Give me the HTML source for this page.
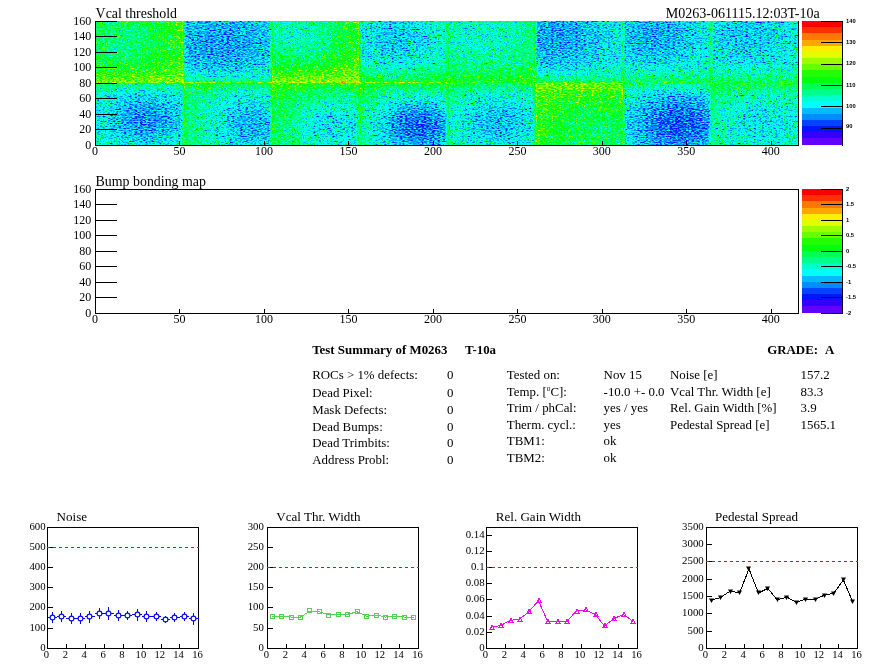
<!DOCTYPE html>
<html><head><meta charset="utf-8"><title>M0263 T-10a</title>
<style>html,body{margin:0;padding:0;background:#fff}svg{display:block;will-change:transform}.ax{shape-rendering:crispEdges}text.s{font-family:"Liberation Sans", sans-serif;font-weight:bold}text{font-family:"Liberation Serif", serif;fill:#000}</style>
</head><body>
<svg width="896" height="672" viewBox="0 0 896 672">
<rect width="896" height="672" fill="#fff"/>
<defs>
<filter id="pal" filterUnits="userSpaceOnUse" x="96" y="21" width="702" height="124" color-interpolation-filters="sRGB">
<feTurbulence type="fractalNoise" baseFrequency="0.37 0.85" numOctaves="1" seed="7" result="n"/>
<feColorMatrix in="n" type="matrix" values=".5 .5 0 0 0 .5 .5 0 0 0 .5 .5 0 0 0 0 0 0 0 1" result="ng"/>
<feComposite in="SourceGraphic" in2="ng" operator="arithmetic" k1="0" k2="1" k3="0.92" k4="-0.46" result="v"/>
<feComponentTransfer in="v"><feFuncR type="discrete" tableValues="0.39 0.2 0 0 0 0 0 0 0 0 0 0.13 0.41 0.6 0.88 1 1 1 1 1"/><feFuncG type="discrete" tableValues="0 0 0.08 0.27 0.55 0.73 1 1 1 1 1 1 1 1 1 0.93 0.65 0.47 0.19 0"/><feFuncB type="discrete" tableValues="1 1 1 1 1 1 0.99 0.8 0.52 0.33 0.05 0 0 0 0 0 0 0 0 0"/></feComponentTransfer>
</filter>
<radialGradient id="t0" gradientUnits="userSpaceOnUse" cx="0" cy="0" r="1" gradientTransform="translate(16 134) scale(50 74)">
<stop offset="0" stop-color="#6c6c6c"/>
<stop offset="0.2" stop-color="#717171"/>
<stop offset="0.4" stop-color="#7c7c7c"/>
<stop offset="0.6" stop-color="#898989"/>
<stop offset="0.8" stop-color="#939393"/>
<stop offset="1" stop-color="#9a9a9a"/>
</radialGradient>
<radialGradient id="t1" gradientUnits="userSpaceOnUse" cx="0" cy="0" r="1" gradientTransform="translate(74 130) scale(58 80)">
<stop offset="0" stop-color="#3e3e3e"/>
<stop offset="0.2" stop-color="#404040"/>
<stop offset="0.4" stop-color="#464646"/>
<stop offset="0.6" stop-color="#4d4d4d"/>
<stop offset="0.8" stop-color="#535353"/>
<stop offset="1" stop-color="#565656"/>
</radialGradient>
<radialGradient id="t2" gradientUnits="userSpaceOnUse" cx="0" cy="0" r="1" gradientTransform="translate(118 142) scale(52 74)">
<stop offset="0" stop-color="#5d5d5d"/>
<stop offset="0.2" stop-color="#636363"/>
<stop offset="0.4" stop-color="#717171"/>
<stop offset="0.6" stop-color="#838383"/>
<stop offset="0.8" stop-color="#919191"/>
<stop offset="1" stop-color="#9a9a9a"/>
</radialGradient>
<radialGradient id="t3" gradientUnits="userSpaceOnUse" cx="0" cy="0" r="1" gradientTransform="translate(178 136) scale(50 72)">
<stop offset="0" stop-color="#474747"/>
<stop offset="0.2" stop-color="#4b4b4b"/>
<stop offset="0.4" stop-color="#545454"/>
<stop offset="0.6" stop-color="#5f5f5f"/>
<stop offset="0.8" stop-color="#686868"/>
<stop offset="1" stop-color="#6e6e6e"/>
</radialGradient>
<radialGradient id="t4" gradientUnits="userSpaceOnUse" cx="0" cy="0" r="1" gradientTransform="translate(228 142) scale(50 74)">
<stop offset="0" stop-color="#5d5d5d"/>
<stop offset="0.2" stop-color="#5f5f5f"/>
<stop offset="0.4" stop-color="#666666"/>
<stop offset="0.6" stop-color="#6d6d6d"/>
<stop offset="0.8" stop-color="#737373"/>
<stop offset="1" stop-color="#777777"/>
</radialGradient>
<radialGradient id="t5" gradientUnits="userSpaceOnUse" cx="0" cy="0" r="1" gradientTransform="translate(272 140) scale(58 80)">
<stop offset="0" stop-color="#3e3e3e"/>
<stop offset="0.2" stop-color="#414141"/>
<stop offset="0.4" stop-color="#484848"/>
<stop offset="0.6" stop-color="#515151"/>
<stop offset="0.8" stop-color="#585858"/>
<stop offset="1" stop-color="#5d5d5d"/>
</radialGradient>
<radialGradient id="t6" gradientUnits="userSpaceOnUse" cx="0" cy="0" r="1" gradientTransform="translate(330 140) scale(54 78)">
<stop offset="0" stop-color="#404040"/>
<stop offset="0.2" stop-color="#444444"/>
<stop offset="0.4" stop-color="#4b4b4b"/>
<stop offset="0.6" stop-color="#555555"/>
<stop offset="0.8" stop-color="#5c5c5c"/>
<stop offset="1" stop-color="#616161"/>
</radialGradient>
<radialGradient id="t7" gradientUnits="userSpaceOnUse" cx="0" cy="0" r="1" gradientTransform="translate(384 142) scale(54 78)">
<stop offset="0" stop-color="#484848"/>
<stop offset="0.2" stop-color="#4a4a4a"/>
<stop offset="0.4" stop-color="#505050"/>
<stop offset="0.6" stop-color="#565656"/>
<stop offset="0.8" stop-color="#5c5c5c"/>
<stop offset="1" stop-color="#5f5f5f"/>
</radialGradient>
<radialGradient id="b0" gradientUnits="userSpaceOnUse" cx="0" cy="0" r="1" gradientTransform="translate(29 33) scale(42 58)">
<stop offset="0" stop-color="#3a3a3a"/>
<stop offset="0.2" stop-color="#3e3e3e"/>
<stop offset="0.4" stop-color="#474747"/>
<stop offset="0.6" stop-color="#525252"/>
<stop offset="0.8" stop-color="#5b5b5b"/>
<stop offset="1" stop-color="#616161"/>
</radialGradient>
<radialGradient id="b1" gradientUnits="userSpaceOnUse" cx="0" cy="0" r="1" gradientTransform="translate(92 26) scale(50 88)">
<stop offset="0" stop-color="#434343"/>
<stop offset="0.2" stop-color="#484848"/>
<stop offset="0.4" stop-color="#565656"/>
<stop offset="0.6" stop-color="#666666"/>
<stop offset="0.8" stop-color="#737373"/>
<stop offset="1" stop-color="#7c7c7c"/>
</radialGradient>
<radialGradient id="b2" gradientUnits="userSpaceOnUse" cx="0" cy="0" r="1" gradientTransform="translate(142 24) scale(50 72)">
<stop offset="0" stop-color="#4e4e4e"/>
<stop offset="0.2" stop-color="#535353"/>
<stop offset="0.4" stop-color="#606060"/>
<stop offset="0.6" stop-color="#6f6f6f"/>
<stop offset="0.8" stop-color="#7c7c7c"/>
<stop offset="1" stop-color="#848484"/>
</radialGradient>
<radialGradient id="b3" gradientUnits="userSpaceOnUse" cx="0" cy="0" r="1" gradientTransform="translate(191 24) scale(48 66)">
<stop offset="0" stop-color="#2f2f2f"/>
<stop offset="0.2" stop-color="#363636"/>
<stop offset="0.4" stop-color="#474747"/>
<stop offset="0.6" stop-color="#5b5b5b"/>
<stop offset="0.8" stop-color="#6c6c6c"/>
<stop offset="1" stop-color="#777777"/>
</radialGradient>
<radialGradient id="b4" gradientUnits="userSpaceOnUse" cx="0" cy="0" r="1" gradientTransform="translate(238 30) scale(52 70)">
<stop offset="0" stop-color="#454545"/>
<stop offset="0.2" stop-color="#494949"/>
<stop offset="0.4" stop-color="#545454"/>
<stop offset="0.6" stop-color="#616161"/>
<stop offset="0.8" stop-color="#6c6c6c"/>
<stop offset="1" stop-color="#737373"/>
</radialGradient>
<radialGradient id="b5" gradientUnits="userSpaceOnUse" cx="0" cy="0" r="1" gradientTransform="translate(296 16) scale(52 74)">
<stop offset="0" stop-color="#757575"/>
<stop offset="0.2" stop-color="#787878"/>
<stop offset="0.4" stop-color="#818181"/>
<stop offset="0.6" stop-color="#8b8b8b"/>
<stop offset="0.8" stop-color="#939393"/>
<stop offset="1" stop-color="#989898"/>
</radialGradient>
<radialGradient id="b6" gradientUnits="userSpaceOnUse" cx="0" cy="0" r="1" gradientTransform="translate(345 27) scale(52 72)">
<stop offset="0" stop-color="#2d2d2d"/>
<stop offset="0.2" stop-color="#323232"/>
<stop offset="0.4" stop-color="#404040"/>
<stop offset="0.6" stop-color="#505050"/>
<stop offset="0.8" stop-color="#5d5d5d"/>
<stop offset="1" stop-color="#666666"/>
</radialGradient>
<radialGradient id="b7" gradientUnits="userSpaceOnUse" cx="0" cy="0" r="1" gradientTransform="translate(396 28) scale(54 72)">
<stop offset="0" stop-color="#505050"/>
<stop offset="0.2" stop-color="#535353"/>
<stop offset="0.4" stop-color="#5b5b5b"/>
<stop offset="0.6" stop-color="#646464"/>
<stop offset="0.8" stop-color="#6c6c6c"/>
<stop offset="1" stop-color="#717171"/>
</radialGradient>
<linearGradient id="band" gradientUnits="userSpaceOnUse" x1="0" y1="80" x2="0" y2="104"><stop offset="0" stop-color="#fff" stop-opacity=".17"/><stop offset=".4" stop-color="#fff" stop-opacity=".07"/><stop offset="1" stop-color="#fff" stop-opacity="0"/></linearGradient>
<linearGradient id="band2" gradientUnits="userSpaceOnUse" x1="0" y1="80" x2="0" y2="66"><stop offset="0" stop-color="#fff" stop-opacity=".13"/><stop offset="1" stop-color="#fff" stop-opacity="0"/></linearGradient>
</defs>
<g filter="url(#pal)">
<rect x="94" y="19" width="706" height="128" fill="#545454"/>
<g transform="translate(96 145) scale(1.69 -0.78)">
<rect x="0" y="80" width="52" height="80" fill="url(#t0)"/>
<rect x="0" y="0" width="52" height="80" fill="url(#b0)"/>
<rect x="52" y="80" width="52" height="80" fill="url(#t1)"/>
<rect x="52" y="0" width="52" height="80" fill="url(#b1)"/>
<rect x="104" y="80" width="52" height="80" fill="url(#t2)"/>
<rect x="104" y="0" width="52" height="80" fill="url(#b2)"/>
<rect x="156" y="80" width="52" height="80" fill="url(#t3)"/>
<rect x="156" y="0" width="52" height="80" fill="url(#b3)"/>
<rect x="208" y="80" width="52" height="80" fill="url(#t4)"/>
<rect x="208" y="0" width="52" height="80" fill="url(#b4)"/>
<rect x="260" y="80" width="52" height="80" fill="url(#t5)"/>
<rect x="260" y="0" width="52" height="80" fill="url(#b5)"/>
<rect x="312" y="80" width="52" height="80" fill="url(#t6)"/>
<rect x="312" y="0" width="52" height="80" fill="url(#b6)"/>
<rect x="364" y="80" width="52" height="80" fill="url(#t7)"/>
<rect x="364" y="0" width="52" height="80" fill="url(#b7)"/>
<rect x="0" y="80" width="416" height="24" fill="url(#band)"/>
<rect x="0" y="66" width="416" height="14" fill="url(#band2)"/>
<g fill="#fff">
<rect x="0" y="79.4" width="208" height="1.3" opacity=".3"/>
<rect x="208" y="79.4" width="208" height="1.3" opacity=".07"/>
<rect x="50.9" y="0" width="2" height="160" opacity=".12"/>
<rect x="102.9" y="0" width="2" height="160" opacity=".12"/>
<rect x="154.9" y="0" width="2" height="160" opacity=".12"/>
<rect x="206.9" y="0" width="2" height="160" opacity=".12"/>
<rect x="258.9" y="0" width="2" height="160" opacity=".12"/>
<rect x="310.9" y="0" width="2" height="160" opacity=".12"/>
<rect x="362.9" y="0" width="2" height="160" opacity=".12"/>
</g>
</g></g>
<path class="ax" d="M95.5 21V145.5H798.5V21M95.5 129.5H117M95.5 114.5H117M95.5 98.5H117M95.5 83.5H117M95.5 67.5H117M95.5 52.5H117M95.5 36.5H117M95.5 21.5H117M179.5 145.5V141M264.5 145.5V141M348.5 145.5V141M433.5 145.5V141M517.5 145.5V141M602.5 145.5V141M686.5 145.5V141M771.5 145.5V141" stroke="#000" stroke-width="1" fill="none"/>
<text x="91.2" y="149.4" text-anchor="end" font-size="12">0</text>
<text x="91.2" y="133.4" text-anchor="end" font-size="12">20</text>
<text x="91.2" y="118.4" text-anchor="end" font-size="12">40</text>
<text x="91.2" y="102.4" text-anchor="end" font-size="12">60</text>
<text x="91.2" y="87.4" text-anchor="end" font-size="12">80</text>
<text x="91.2" y="71.4" text-anchor="end" font-size="12">100</text>
<text x="91.2" y="56.4" text-anchor="end" font-size="12">120</text>
<text x="91.2" y="40.4" text-anchor="end" font-size="12">140</text>
<text x="91.2" y="25.4" text-anchor="end" font-size="12">160</text>
<text x="94.9" y="155.1" text-anchor="middle" font-size="12">0</text>
<text x="179.4" y="155.1" text-anchor="middle" font-size="12">50</text>
<text x="263.89" y="155.1" text-anchor="middle" font-size="12">100</text>
<text x="348.39" y="155.1" text-anchor="middle" font-size="12">150</text>
<text x="432.88" y="155.1" text-anchor="middle" font-size="12">200</text>
<text x="517.38" y="155.1" text-anchor="middle" font-size="12">250</text>
<text x="601.87" y="155.1" text-anchor="middle" font-size="12">300</text>
<text x="686.37" y="155.1" text-anchor="middle" font-size="12">350</text>
<text x="770.86" y="155.1" text-anchor="middle" font-size="12">400</text>
<text x="95.6" y="17.5" font-size="13.9">Vcal threshold</text>
<text x="819.8" y="17.5" text-anchor="end" font-size="14.05">M0263-061115.12:03T-10a</text>
<rect class="ax" x="802" y="138" width="40" height="7" fill="#6300ff"/>
<rect class="ax" x="802" y="132" width="40" height="6" fill="#3300ff"/>
<rect class="ax" x="802" y="126" width="40" height="6" fill="#0014ff"/>
<rect class="ax" x="802" y="120" width="40" height="6" fill="#0044ff"/>
<rect class="ax" x="802" y="114" width="40" height="6" fill="#008bff"/>
<rect class="ax" x="802" y="108" width="40" height="6" fill="#00bbff"/>
<rect class="ax" x="802" y="101" width="40" height="7" fill="#00fffc"/>
<rect class="ax" x="802" y="95" width="40" height="6" fill="#00ffcc"/>
<rect class="ax" x="802" y="89" width="40" height="6" fill="#00ff85"/>
<rect class="ax" x="802" y="83" width="40" height="6" fill="#00ff55"/>
<rect class="ax" x="802" y="77" width="40" height="6" fill="#00ff0e"/>
<rect class="ax" x="802" y="70" width="40" height="7" fill="#22ff00"/>
<rect class="ax" x="802" y="64" width="40" height="6" fill="#69ff00"/>
<rect class="ax" x="802" y="58" width="40" height="6" fill="#99ff00"/>
<rect class="ax" x="802" y="52" width="40" height="6" fill="#e0ff00"/>
<rect class="ax" x="802" y="46" width="40" height="6" fill="#ffee00"/>
<rect class="ax" x="802" y="40" width="40" height="6" fill="#ffa700"/>
<rect class="ax" x="802" y="33" width="40" height="7" fill="#ff7700"/>
<rect class="ax" x="802" y="27" width="40" height="6" fill="#ff3000"/>
<rect class="ax" x="802" y="21" width="40" height="6" fill="#ff0000"/>
<path class="ax" d="M842.5 21V146" stroke="#000" stroke-width="1" fill="none"/>
<path class="ax" d="M821 21.5H842.5M821 42.5H842.5M821 64.5H842.5M821 85.5H842.5M821 106.5H842.5M821 128.5H842.5" stroke="#000" stroke-width="1" fill="none"/>
<text class="s" x="846" y="22.7" font-size="5.8">140</text>
<text class="s" x="846" y="43.7" font-size="5.8">130</text>
<text class="s" x="846" y="64.5" font-size="5.8">120</text>
<text class="s" x="846" y="86.7" font-size="5.8">110</text>
<text class="s" x="846" y="107.7" font-size="5.8">100</text>
<text class="s" x="846" y="128.4" font-size="5.8">90</text>
<path class="ax" d="M95.5 189V313.5H798.5V189M95.5 189.5H798.5M95.5 297.5H117M95.5 282.5H117M95.5 266.5H117M95.5 251.5H117M95.5 235.5H117M95.5 220.5H117M95.5 204.5H117M95.5 189.5H117M179.5 313.5V309M264.5 313.5V309M348.5 313.5V309M433.5 313.5V309M517.5 313.5V309M602.5 313.5V309M686.5 313.5V309M771.5 313.5V309" stroke="#000" stroke-width="1" fill="none"/>
<text x="91.2" y="317.4" text-anchor="end" font-size="12">0</text>
<text x="91.2" y="301.4" text-anchor="end" font-size="12">20</text>
<text x="91.2" y="286.4" text-anchor="end" font-size="12">40</text>
<text x="91.2" y="270.4" text-anchor="end" font-size="12">60</text>
<text x="91.2" y="255.4" text-anchor="end" font-size="12">80</text>
<text x="91.2" y="239.4" text-anchor="end" font-size="12">100</text>
<text x="91.2" y="224.4" text-anchor="end" font-size="12">120</text>
<text x="91.2" y="208.4" text-anchor="end" font-size="12">140</text>
<text x="91.2" y="193.4" text-anchor="end" font-size="12">160</text>
<text x="94.9" y="323.1" text-anchor="middle" font-size="12">0</text>
<text x="179.4" y="323.1" text-anchor="middle" font-size="12">50</text>
<text x="263.89" y="323.1" text-anchor="middle" font-size="12">100</text>
<text x="348.39" y="323.1" text-anchor="middle" font-size="12">150</text>
<text x="432.88" y="323.1" text-anchor="middle" font-size="12">200</text>
<text x="517.38" y="323.1" text-anchor="middle" font-size="12">250</text>
<text x="601.87" y="323.1" text-anchor="middle" font-size="12">300</text>
<text x="686.37" y="323.1" text-anchor="middle" font-size="12">350</text>
<text x="770.86" y="323.1" text-anchor="middle" font-size="12">400</text>
<text x="95.6" y="185.6" font-size="13.9">Bump bonding map</text>
<rect class="ax" x="802" y="306" width="40" height="7" fill="#6300ff"/>
<rect class="ax" x="802" y="300" width="40" height="6" fill="#3300ff"/>
<rect class="ax" x="802" y="294" width="40" height="6" fill="#0014ff"/>
<rect class="ax" x="802" y="288" width="40" height="6" fill="#0044ff"/>
<rect class="ax" x="802" y="282" width="40" height="6" fill="#008bff"/>
<rect class="ax" x="802" y="276" width="40" height="6" fill="#00bbff"/>
<rect class="ax" x="802" y="269" width="40" height="7" fill="#00fffc"/>
<rect class="ax" x="802" y="263" width="40" height="6" fill="#00ffcc"/>
<rect class="ax" x="802" y="257" width="40" height="6" fill="#00ff85"/>
<rect class="ax" x="802" y="251" width="40" height="6" fill="#00ff55"/>
<rect class="ax" x="802" y="245" width="40" height="6" fill="#00ff0e"/>
<rect class="ax" x="802" y="238" width="40" height="7" fill="#22ff00"/>
<rect class="ax" x="802" y="232" width="40" height="6" fill="#69ff00"/>
<rect class="ax" x="802" y="226" width="40" height="6" fill="#99ff00"/>
<rect class="ax" x="802" y="220" width="40" height="6" fill="#e0ff00"/>
<rect class="ax" x="802" y="214" width="40" height="6" fill="#ffee00"/>
<rect class="ax" x="802" y="208" width="40" height="6" fill="#ffa700"/>
<rect class="ax" x="802" y="201" width="40" height="7" fill="#ff7700"/>
<rect class="ax" x="802" y="195" width="40" height="6" fill="#ff3000"/>
<rect class="ax" x="802" y="189" width="40" height="6" fill="#ff0000"/>
<path class="ax" d="M842.5 189V314" stroke="#000" stroke-width="1" fill="none"/>
<path class="ax" d="M821 189.5H842.5M821 204.5H842.5M821 220.5H842.5M821 235.5H842.5M821 251.5H842.5M821 266.5H842.5M821 282.5H842.5M821 297.5H842.5M821 313.5H842.5" stroke="#000" stroke-width="1" fill="none"/>
<text class="s" x="846" y="191.2" font-size="5.8">2</text>
<text class="s" x="846" y="206.2" font-size="5.8">1.5</text>
<text class="s" x="846" y="222.2" font-size="5.8">1</text>
<text class="s" x="846" y="237.2" font-size="5.8">0.5</text>
<text class="s" x="846" y="253.2" font-size="5.8">0</text>
<text class="s" x="846" y="268.2" font-size="5.8">-0.5</text>
<text class="s" x="846" y="284.2" font-size="5.8">-1</text>
<text class="s" x="846" y="299.2" font-size="5.8">-1.5</text>
<text class="s" x="846" y="315.2" font-size="5.8">-2</text>
<g font-size="12.9" xml:space="preserve">
<text x="312.2" y="354.4" font-weight="bold">Test Summary of M0263</text>
<text x="465" y="354.4" font-weight="bold">T-10a</text>
<text x="767.2" y="354.4" font-weight="bold">GRADE:</text>
<text x="824.9" y="354.4" font-weight="bold">A</text>
<text x="312.2" y="378.7">ROCs &gt; 1% defects:</text>
<text x="447.1" y="378.7">0</text>
<text x="506.8" y="378.7">Tested on:</text>
<text x="603.6" y="378.7">Nov 15</text>
<text x="670" y="378.7">Noise [e]</text>
<text x="800.6" y="378.7">157.2</text>
<text x="312.2" y="396.5">Dead Pixel:</text>
<text x="447.1" y="396.5">0</text>
<text x="506.8" y="395.7">Temp. [<tspan font-size="7.4" dy="-5.2">o</tspan><tspan dy="5.2">C]:</tspan></text>
<text x="603.6" y="395.7">-10.0 +- 0.0</text>
<text x="670" y="395.7">Vcal Thr. Width [e]</text>
<text x="800.6" y="395.7">83.3</text>
<text x="312.2" y="413.9">Mask Defects:</text>
<text x="447.1" y="413.9">0</text>
<text x="506.8" y="412.3">Trim / phCal:</text>
<text x="603.6" y="412.3">yes / yes</text>
<text x="670" y="412.3">Rel. Gain Width [%]</text>
<text x="800.6" y="412.3">3.9</text>
<text x="312.2" y="430.7">Dead Bumps:</text>
<text x="447.1" y="430.7">0</text>
<text x="506.8" y="428.8">Therm. cycl.:</text>
<text x="603.6" y="428.8">yes</text>
<text x="670" y="428.8">Pedestal Spread [e]</text>
<text x="800.6" y="428.8">1565.1</text>
<text x="312.2" y="447">Dead Trimbits:</text>
<text x="447.1" y="447">0</text>
<text x="506.8" y="445.4">TBM1:</text>
<text x="603.6" y="445.4">ok</text>
<text x="312.2" y="463.8">Address Probl:</text>
<text x="447.1" y="463.8">0</text>
<text x="506.8" y="461.8">TBM2:</text>
<text x="603.6" y="461.8">ok</text>
</g>
<g>
<rect x="47.5" y="527.5" width="151" height="121" fill="#fff" stroke="#000" stroke-width="1"/>
<path class="ax" d="M47.5 628.5H53.3M47.5 607.5H53.3M47.5 587.5H53.3M47.5 567.5H53.3M47.5 547.5H53.3M66.5 648.5V643.9M85.5 648.5V643.9M104.5 648.5V643.9M123.5 648.5V643.9M142.5 648.5V643.9M161.5 648.5V643.9M179.5 648.5V643.9" stroke="#000" stroke-width="1" fill="none"/>
<text x="45.6" y="651.4" text-anchor="end" font-size="10.8">0</text>
<text x="45.6" y="631.4" text-anchor="end" font-size="10.8">100</text>
<text x="45.6" y="610.4" text-anchor="end" font-size="10.8">200</text>
<text x="45.6" y="590.4" text-anchor="end" font-size="10.8">300</text>
<text x="45.6" y="570.4" text-anchor="end" font-size="10.8">400</text>
<text x="45.6" y="550.4" text-anchor="end" font-size="10.8">500</text>
<text x="45.6" y="530.4" text-anchor="end" font-size="10.8">600</text>
<text x="46.5" y="658.4" text-anchor="middle" font-size="10.6">0</text>
<text x="65.38" y="658.4" text-anchor="middle" font-size="10.6">2</text>
<text x="84.25" y="658.4" text-anchor="middle" font-size="10.6">4</text>
<text x="103.12" y="658.4" text-anchor="middle" font-size="10.6">6</text>
<text x="122" y="658.4" text-anchor="middle" font-size="10.6">8</text>
<text x="140.88" y="658.4" text-anchor="middle" font-size="10.6">10</text>
<text x="159.75" y="658.4" text-anchor="middle" font-size="10.6">12</text>
<text x="178.62" y="658.4" text-anchor="middle" font-size="10.6">14</text>
<text x="197.5" y="658.4" text-anchor="middle" font-size="10.6">16</text>
<text x="56.6" y="520.8" font-size="13.05">Noise</text>
<path class="ax" d="M47 547.5H199" stroke="#ff0000" stroke-width="1" stroke-dasharray="3 3" fill="none"/>
<path class="ax" d="M47.5 617.5H56.94M52.5 612.1V622.9M56.94 616.5H66.38M61.5 611.4V621.6M66.38 618.5H75.81M71.5 613.4V623.6M75.81 618.5H85.25M80.5 613.3V623.7M85.25 616.5H94.69M89.5 610.5V622.5M94.69 613.5H104.12M99.5 608.1V618.9M104.12 613.5H113.56M108.5 607V620M113.56 615.5H123M118.5 610.4V620.6M123 615.5H132.44M127.5 610.6V620.4M132.44 614.5H141.88M137.5 608.5V620.5M141.88 616.5H151.31M146.5 610.8V622.2M151.31 616.5H160.75M156.5 611.6V621.4M160.75 619.5H170.19M165.5 615.7V623.3M170.19 617.5H179.62M174.5 613.1V621.9M179.62 616.5H189.06M184.5 611.9V621.1M189.06 618.5H198.5M193.5 612.5V624.5" stroke="#0000ff" stroke-width="1" fill="none"/>
<circle cx="52.5" cy="617.5" r="2.4" fill="#fff" stroke="#0000ff" stroke-width="1.1"/>
<circle cx="61.5" cy="616.5" r="2.4" fill="#fff" stroke="#0000ff" stroke-width="1.1"/>
<circle cx="71.5" cy="618.5" r="2.4" fill="#fff" stroke="#0000ff" stroke-width="1.1"/>
<circle cx="80.5" cy="618.5" r="2.4" fill="#fff" stroke="#0000ff" stroke-width="1.1"/>
<circle cx="89.5" cy="616.5" r="2.4" fill="#fff" stroke="#0000ff" stroke-width="1.1"/>
<circle cx="99.5" cy="613.5" r="2.4" fill="#fff" stroke="#0000ff" stroke-width="1.1"/>
<circle cx="108.5" cy="613.5" r="2.4" fill="#fff" stroke="#0000ff" stroke-width="1.1"/>
<circle cx="118.5" cy="615.5" r="2.4" fill="#fff" stroke="#0000ff" stroke-width="1.1"/>
<circle cx="127.5" cy="615.5" r="2.4" fill="#fff" stroke="#0000ff" stroke-width="1.1"/>
<circle cx="137.5" cy="614.5" r="2.4" fill="#fff" stroke="#0000ff" stroke-width="1.1"/>
<circle cx="146.5" cy="616.5" r="2.4" fill="#fff" stroke="#0000ff" stroke-width="1.1"/>
<circle cx="156.5" cy="616.5" r="2.4" fill="#fff" stroke="#0000ff" stroke-width="1.1"/>
<circle cx="165.5" cy="619.5" r="2.4" fill="#fff" stroke="#0000ff" stroke-width="1.1"/>
<circle cx="174.5" cy="617.5" r="2.4" fill="#fff" stroke="#0000ff" stroke-width="1.1"/>
<circle cx="184.5" cy="616.5" r="2.4" fill="#fff" stroke="#0000ff" stroke-width="1.1"/>
<circle cx="193.5" cy="618.5" r="2.4" fill="#fff" stroke="#0000ff" stroke-width="1.1"/>
</g>
<g>
<rect x="267.5" y="527.5" width="151" height="121" fill="#fff" stroke="#000" stroke-width="1"/>
<path class="ax" d="M267.5 628.5H273.3M267.5 607.5H273.3M267.5 587.5H273.3M267.5 567.5H273.3M267.5 547.5H273.3M286.5 648.5V643.9M305.5 648.5V643.9M324.5 648.5V643.9M343.5 648.5V643.9M362.5 648.5V643.9M381.5 648.5V643.9M399.5 648.5V643.9" stroke="#000" stroke-width="1" fill="none"/>
<text x="263.9" y="651.4" text-anchor="end" font-size="10.8">0</text>
<text x="263.9" y="631.4" text-anchor="end" font-size="10.8">50</text>
<text x="263.9" y="610.4" text-anchor="end" font-size="10.8">100</text>
<text x="263.9" y="590.4" text-anchor="end" font-size="10.8">150</text>
<text x="263.9" y="570.4" text-anchor="end" font-size="10.8">200</text>
<text x="263.9" y="550.4" text-anchor="end" font-size="10.8">250</text>
<text x="263.9" y="530.4" text-anchor="end" font-size="10.8">300</text>
<text x="266.5" y="658.4" text-anchor="middle" font-size="10.6">0</text>
<text x="285.38" y="658.4" text-anchor="middle" font-size="10.6">2</text>
<text x="304.25" y="658.4" text-anchor="middle" font-size="10.6">4</text>
<text x="323.12" y="658.4" text-anchor="middle" font-size="10.6">6</text>
<text x="342" y="658.4" text-anchor="middle" font-size="10.6">8</text>
<text x="360.88" y="658.4" text-anchor="middle" font-size="10.6">10</text>
<text x="379.75" y="658.4" text-anchor="middle" font-size="10.6">12</text>
<text x="398.62" y="658.4" text-anchor="middle" font-size="10.6">14</text>
<text x="417.5" y="658.4" text-anchor="middle" font-size="10.6">16</text>
<text x="276.3" y="520.8" font-size="13.05">Vcal Thr. Width</text>
<path class="ax" d="M267 567.5H419" stroke="#ff0000" stroke-width="1" stroke-dasharray="3 3" fill="none"/>
<path class="ax" d="M272.22 616.23L281.66 616.23L291.09 617.04L300.53 617.04L309.97 610.99L319.41 611.8L328.84 615.02L338.28 614.22L347.72 614.22L357.16 611.8L366.59 616.23L376.03 615.02L385.47 617.04L394.91 616.23L404.34 617.04L413.78 617.04" stroke="#55d350" stroke-width="1" fill="none"/>
<path class="ax" d="M270.5 614.5h4v4h-4zM279.5 614.5h4v4h-4zM289.5 615.5h4v4h-4zM298.5 615.5h4v4h-4zM307.5 608.5h4v4h-4zM317.5 609.5h4v4h-4zM326.5 613.5h4v4h-4zM336.5 612.5h4v4h-4zM345.5 612.5h4v4h-4zM355.5 609.5h4v4h-4zM364.5 614.5h4v4h-4zM374.5 613.5h4v4h-4zM383.5 615.5h4v4h-4zM392.5 614.5h4v4h-4zM402.5 615.5h4v4h-4zM411.5 615.5h4v4h-4z" stroke="#55d350" stroke-width="1" fill="none"/>
</g>
<g>
<rect x="486.5" y="527.5" width="151" height="121" fill="#fff" stroke="#000" stroke-width="1"/>
<path class="ax" d="M486.5 632.5H492.3M486.5 616.5H492.3M486.5 599.5H492.3M486.5 583.5H492.3M486.5 567.5H492.3M486.5 551.5H492.3M486.5 535.5H492.3M505.5 648.5V643.9M524.5 648.5V643.9M543.5 648.5V643.9M562.5 648.5V643.9M581.5 648.5V643.9M600.5 648.5V643.9M618.5 648.5V643.9" stroke="#000" stroke-width="1" fill="none"/>
<text x="484.6" y="651.4" text-anchor="end" font-size="10.8">0</text>
<text x="484.6" y="635.4" text-anchor="end" font-size="10.8">0.02</text>
<text x="484.6" y="619.4" text-anchor="end" font-size="10.8">0.04</text>
<text x="484.6" y="602.4" text-anchor="end" font-size="10.8">0.06</text>
<text x="484.6" y="586.4" text-anchor="end" font-size="10.8">0.08</text>
<text x="484.6" y="570.4" text-anchor="end" font-size="10.8">0.1</text>
<text x="484.6" y="554.4" text-anchor="end" font-size="10.8">0.12</text>
<text x="484.6" y="538.4" text-anchor="end" font-size="10.8">0.14</text>
<text x="485.5" y="658.4" text-anchor="middle" font-size="10.6">0</text>
<text x="504.38" y="658.4" text-anchor="middle" font-size="10.6">2</text>
<text x="523.25" y="658.4" text-anchor="middle" font-size="10.6">4</text>
<text x="542.12" y="658.4" text-anchor="middle" font-size="10.6">6</text>
<text x="561" y="658.4" text-anchor="middle" font-size="10.6">8</text>
<text x="579.88" y="658.4" text-anchor="middle" font-size="10.6">10</text>
<text x="598.75" y="658.4" text-anchor="middle" font-size="10.6">12</text>
<text x="617.62" y="658.4" text-anchor="middle" font-size="10.6">14</text>
<text x="636.5" y="658.4" text-anchor="middle" font-size="10.6">16</text>
<text x="495.8" y="520.8" font-size="13.05">Rel. Gain Width</text>
<path class="ax" d="M486 567.5H638" stroke="#ff0000" stroke-width="1" stroke-dasharray="3 3" fill="none"/>
<path class="ax" d="M491.22 627.12L500.66 625.59L510.09 620.35L519.53 619.3L528.97 611.55L538.41 600.75L547.84 621.88L557.28 621.07L566.72 621.88L576.16 611.07L585.59 609.78L595.03 614.3L604.47 625.99L613.91 618.65L623.34 614.3L632.78 621.23" stroke="#ff00ff" stroke-width="1" fill="none"/>
<path class="ax" d="M490 629.5L492 624.9L494 629.5zM499 627.5L501 622.9L503 627.5zM509 622.5L511 617.9L513 622.5zM518 621.5L520 616.9L522 621.5zM527 613.5L529 608.9L531 613.5zM537 602.5L539 597.9L541 602.5zM546 623.5L548 618.9L550 623.5zM556 623.5L558 618.9L560 623.5zM565 623.5L567 618.9L569 623.5zM575 613.5L577 608.9L579 613.5zM584 611.5L586 606.9L588 611.5zM594 616.5L596 611.9L598 616.5zM603 627.5L605 622.9L607 627.5zM612 620.5L614 615.9L616 620.5zM622 616.5L624 611.9L626 616.5zM631 623.5L633 618.9L635 623.5z" stroke="#ff00ff" stroke-width="1" fill="none"/>
</g>
<g>
<rect x="706.5" y="527.5" width="151" height="121" fill="#fff" stroke="#000" stroke-width="1"/>
<path class="ax" d="M706.5 631.5H712.3M706.5 613.5H712.3M706.5 596.5H712.3M706.5 579.5H712.3M706.5 561.5H712.3M706.5 544.5H712.3M725.5 648.5V643.9M744.5 648.5V643.9M763.5 648.5V643.9M782.5 648.5V643.9M801.5 648.5V643.9M820.5 648.5V643.9M838.5 648.5V643.9" stroke="#000" stroke-width="1" fill="none"/>
<text x="703.7" y="651.4" text-anchor="end" font-size="10.8">0</text>
<text x="703.7" y="634.4" text-anchor="end" font-size="10.8">500</text>
<text x="703.7" y="616.4" text-anchor="end" font-size="10.8">1000</text>
<text x="703.7" y="599.4" text-anchor="end" font-size="10.8">1500</text>
<text x="703.7" y="582.4" text-anchor="end" font-size="10.8">2000</text>
<text x="703.7" y="564.4" text-anchor="end" font-size="10.8">2500</text>
<text x="703.7" y="547.4" text-anchor="end" font-size="10.8">3000</text>
<text x="703.7" y="530.4" text-anchor="end" font-size="10.8">3500</text>
<text x="705.5" y="658.4" text-anchor="middle" font-size="10.6">0</text>
<text x="724.38" y="658.4" text-anchor="middle" font-size="10.6">2</text>
<text x="743.25" y="658.4" text-anchor="middle" font-size="10.6">4</text>
<text x="762.12" y="658.4" text-anchor="middle" font-size="10.6">6</text>
<text x="781" y="658.4" text-anchor="middle" font-size="10.6">8</text>
<text x="799.88" y="658.4" text-anchor="middle" font-size="10.6">10</text>
<text x="818.75" y="658.4" text-anchor="middle" font-size="10.6">12</text>
<text x="837.62" y="658.4" text-anchor="middle" font-size="10.6">14</text>
<text x="856.5" y="658.4" text-anchor="middle" font-size="10.6">16</text>
<text x="715" y="520.8" font-size="13.05">Pedestal Spread</text>
<path class="ax" d="M706 561.5H858" stroke="#ff0000" stroke-width="1" stroke-dasharray="3 3" fill="none"/>
<path class="ax" d="M711.22 600.13L720.66 597.54L730.09 591.04L739.53 592.98L748.97 568.92L758.41 592.98L767.84 588.41L777.28 599.93L786.72 597.09L796.16 602.07L805.59 599.27L815.03 599.27L824.47 595.16L833.91 593.19L843.34 579.98L852.78 601.86" stroke="#000000" stroke-width="1" fill="none"/>
<path d="M709 598.5h5L711.5 603.1zM718 595.5h5L720.5 600.1zM728 589.5h5L730.5 594.1zM737 590.5h5L739.5 595.1zM746 566.5h5L748.5 571.1zM756 590.5h5L758.5 595.1zM765 586.5h5L767.5 591.1zM775 597.5h5L777.5 602.1zM784 595.5h5L786.5 600.1zM794 600.5h5L796.5 605.1zM803 597.5h5L805.5 602.1zM813 597.5h5L815.5 602.1zM822 593.5h5L824.5 598.1zM831 591.5h5L833.5 596.1zM841 577.5h5L843.5 582.1zM850 599.5h5L852.5 604.1z" stroke="none" fill="#000000"/>
</g>
</svg>
</body></html>
